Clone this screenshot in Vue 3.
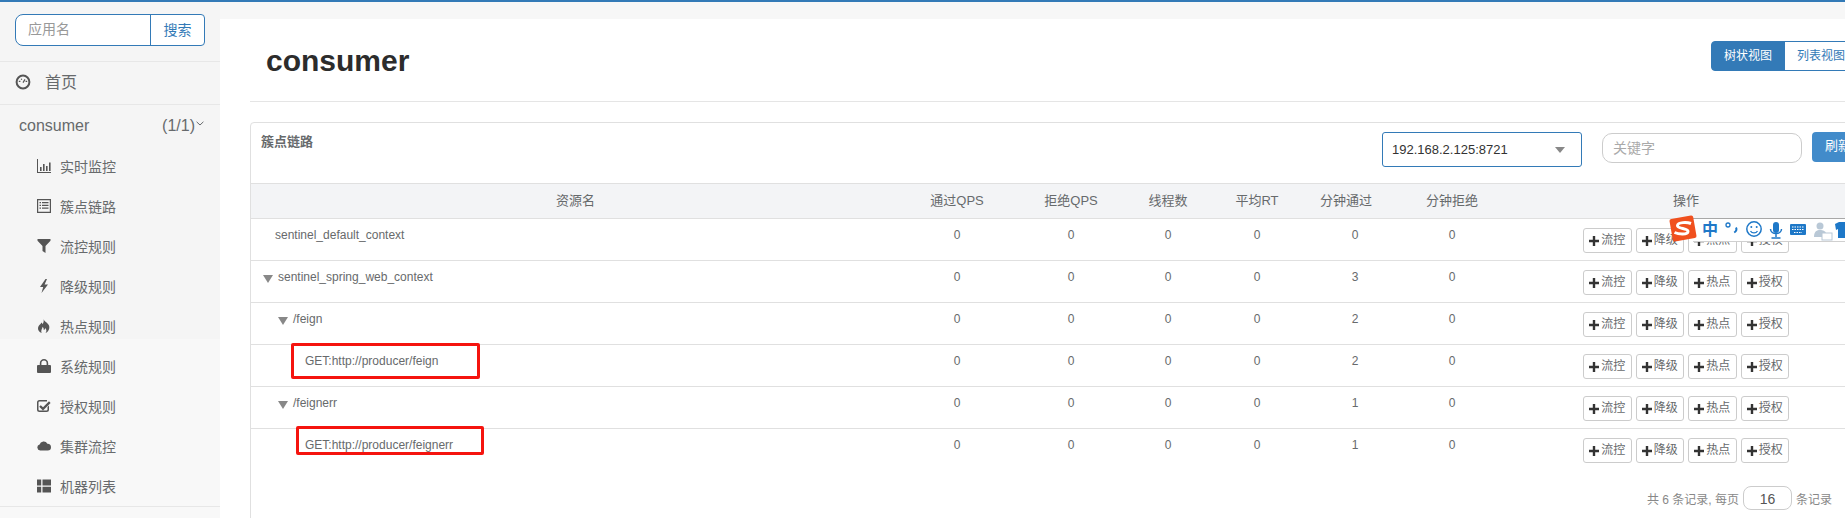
<script setup>
const menu = [
  { label: '实时监控', icon: 'chart' },
  { label: '簇点链路', icon: 'list' },
  { label: '流控规则', icon: 'filter' },
  { label: '降级规则', icon: 'bolt' },
  { label: '热点规则', icon: 'fire' },
  { label: '系统规则', icon: 'lock' },
  { label: '授权规则', icon: 'check' },
  { label: '集群流控', icon: 'cloud' },
  { label: '机器列表', icon: 'grid' }
]
const heads = ['资源名', '通过QPS', '拒绝QPS', '线程数', '平均RT', '分钟通过', '分钟拒绝', '操作']
const rows = [
  { name: 'sentinel_default_context', level: 'l0', arrow: false, nums: [0, 0, 0, 0, 0, 0] },
  { name: 'sentinel_spring_web_context', level: 'l0', arrow: true, nums: [0, 0, 0, 0, 3, 0] },
  { name: '/feign', level: 'l1', arrow: true, nums: [0, 0, 0, 0, 2, 0] },
  { name: 'GET:http://producer/feign', level: 'l2', arrow: false, nums: [0, 0, 0, 0, 2, 0] },
  { name: '/feignerr', level: 'l1', arrow: true, nums: [0, 0, 0, 0, 1, 0] },
  { name: 'GET:http://producer/feignerr', level: 'l2', arrow: false, nums: [0, 0, 0, 0, 1, 0] }
]
const actions = ['流控', '降级', '热点', '授权']
</script>

<template>
  <div class="page">
    <aside class="sidebar">
      <div class="search">
        <div class="search-group">
          <span class="search-input">应用名</span>
          <span class="search-btn">搜索</span>
        </div>
      </div>
      <div class="home">
        <svg class="home-icon" viewBox="0 0 16 16">
          <circle cx="8" cy="8" r="6.4" fill="none" stroke="#555" stroke-width="2" />
          <path d="M3.8 7.4h1.6M10.6 7.4h1.6M6.2 4.8l.6 1M8 8.6l2-3.2" stroke="#555" stroke-width="1.2" fill="none" />
        </svg>
        <span>首页</span>
      </div>
      <div class="app-row">
        <span>consumer</span>
        <span class="app-count">(1/1)
          <svg class="chevron" viewBox="0 0 8 5"><path d="M.6.8 4 4 7.4.8" fill="none" stroke="#676a6c" stroke-width="1" /></svg>
        </span>
      </div>
      <nav class="menu">
        <div v-for="m in menu" :key="m.label" class="menu-item">
          <svg class="menu-icon" viewBox="0 0 14 14" fill="#555">
            <path v-if="m.icon === 'chart'" d="M0 0h1v13h14v1H0zM3 8h1.6v4H3zM6 5h1.6v7H6zM9 7h1.6v5H9zM12 3.500h1.600V12H12z" />
            <path v-else-if="m.icon === 'list'" fill-rule="evenodd" d="M0 0h14v14H0zM1.200 1.200v11.600h11.600V1.200zM2.500 3h1.500v1.300H2.500zM5 3h6.500v1.300H5zM2.500 5.700h1.500V7H2.500zM5 5.700h6.500V7H5zM2.500 8.400h1.500v1.300H2.500zM5 8.400h6.500v1.300H5z" />
            <path v-else-if="m.icon === 'filter'" d="M.5 0h13v1.800L8.500 7v7L5.500 12V7L.5 1.800z" />
            <path v-else-if="m.icon === 'bolt'" d="M8.500 0 3 8h3.200L4.500 14 11 5.500H7.600L10 0z" />
            <path v-else-if="m.icon === 'fire'" d="M6.500 0c.8 2.600 4.300 3.600 5.500 6.500 1 2.800-.3 6.300-3.500 7.500 1.300-1.700 1.200-3.600-.3-5-.1 1.200-.7 1.800-1.500 2.100.2-1.500-.2-2.600-1.200-3.400.1 2.200-2 3-.8 6.300C1.800 13 .4 10.500 1.300 7.800 2 5.700 4 5.300 4.200 3.500c.8.400 1.300 1 1.400 1.800C6.600 3.800 7 2 6.500 0z" />
            <path v-else-if="m.icon === 'lock'" d="M1 6h1.800V4.200a4.200 4.200 0 0 1 8.400 0V6H13a1 1 0 0 1 1 1v6a1 1 0 0 1-1 1H1a1 1 0 0 1-1-1V7a1 1 0 0 1 1-1zm3.400 0h5.200V4.200a2.600 2.600 0 0 0-5.200 0z" />
            <path v-else-if="m.icon === 'check'" d="M2.500 1H10v1.500H2.500a1 1 0 0 0-1 1v7a1 1 0 0 0 1 1h7a1 1 0 0 0 1-1V8L12 6.500v4a2.500 2.500 0 0 1-2.500 2.500h-7A2.500 2.500 0 0 1 0 10.500v-7A2.500 2.500 0 0 1 2.500 1zM3.800 6.200 6 8.300l6-6 1.600 1.600L6 11.500 2.200 7.800z" />
            <path v-else-if="m.icon === 'cloud'" d="M3.200 11.500A3 3 0 0 1 2.600 5.600 4.200 4.200 0 0 1 10.400 4.700 3.500 3.500 0 0 1 14 8.200a3.300 3.300 0 0 1-3.300 3.300z" />
            <path v-else d="M0 .5h4.200v6H0zM5.500.5H14v6H5.500zM0 7.800h4.200v5.700H0zM5.500 7.800H14v5.700H5.500z" />
          </svg>
          <span>{{ m.label }}</span>
        </div>
      </nav>
    </aside>

    <main class="main">
      <div class="content">
        <header class="title-row">
          <h1>consumer</h1>
          <div class="toggle">
            <span class="toggle-on">树状视图</span>
            <span class="toggle-off">列表视图</span>
          </div>
        </header>

        <section class="box">
          <div class="box-head">
            <h5>簇点链路</h5>
            <div class="select">
              <span>192.168.2.125:8721</span>
              <i class="select-caret"></i>
            </div>
            <span class="keyword">关键字</span>
            <span class="refresh">刷新</span>
          </div>

          <div class="grid grid-head">
            <div v-for="h in heads" :key="h" class="head-cell" :class="{ nudge: h === '分钟通过' }">{{ h }}</div>
          </div>
          <div v-for="(r, idx) in rows" :key="r.name" class="grid grid-row" :class="{ last: idx === rows.length - 1 }">
            <div class="name-cell" :class="r.level">
              <i v-if="r.arrow" class="tree-arrow"></i>
              <span>{{ r.name }}</span>
            </div>
            <div v-for="(n, i) in r.nums" :key="i" class="num-cell">{{ n }}</div>
            <div class="ops">
              <span v-for="a in actions" :key="a" class="op">
                <svg class="plus" viewBox="0 0 10 10"><path d="M3.800 0h2.400v3.800H10v2.400H6.200V10H3.800V6.200H0V3.800h3.800z" fill="#333" /></svg>{{ a }}
              </span>
            </div>
          </div>

          <div class="pager">
            <span>共 6 条记录, 每页</span>
            <span class="page-size">16</span>
            <span>条记录</span>
          </div>
        </section>
      </div>
    </main>

    <div class="mark mark-a"></div>
    <div class="mark mark-b"></div>

    <div class="ime">
      <svg width="176" height="28" viewBox="0 0 176 28">
        <rect x="24" y="3" width="152" height="23" fill="#fff" />
        <path d="M24 3.500h152" stroke="#a8a8a8" />
        <path d="M24 26.500h152" stroke="#d0d0d0" />
        <rect x="2" y="2" width="24" height="23" rx="2" fill="#f0501e" transform="rotate(-10 14 13.500)" />
        <path d="M22 8.500c-4-1.500-13-1.500-13.500 2s11 2.500 10.500 6-9 3-13.500 1" fill="none" stroke="#fff" stroke-width="3" />
        <text x="33" y="20" font-size="16" font-weight="700" fill="#1e78c8" font-family="Noto Sans CJK SC">中</text>
        <circle cx="59" cy="10" r="2" fill="none" stroke="#1e78c8" stroke-width="1.300" />
        <path d="M67 12.500c1 2-.2 4-1.800 5" fill="none" stroke="#1e78c8" stroke-width="2" />
        <circle cx="85" cy="14" r="7.200" fill="none" stroke="#1e78c8" stroke-width="1.500" />
        <circle cx="82.300" cy="12" r="1" fill="#1e78c8" /><circle cx="87.700" cy="12" r="1" fill="#1e78c8" />
        <path d="M81.500 16c1.500 2.500 5.500 2.500 7 0" fill="none" stroke="#1e78c8" stroke-width="1.300" />
        <rect x="104" y="7" width="6" height="11" rx="3" fill="#1e78c8" />
        <path d="M101.500 14c0 6 11 6 11 0M107 19v3M102.500 23h9" fill="none" stroke="#1e78c8" stroke-width="1.500" />
        <rect x="121" y="9" width="16" height="11" rx="1" fill="#1e78c8" />
        <path d="M123 12h12M123 14.500h12M125 17.500h8" stroke="#fff" stroke-width="1.200" stroke-dasharray="1.500 1" />
        <circle cx="151" cy="11" r="3.500" fill="#b9c8d6" />
        <path d="M145 22c0-6 3-7 6-7s6 1 6 4v3z" fill="#b9c8d6" />
        <rect x="153" y="18" width="10" height="7" fill="#fff" stroke="#b9c8d6" />
        <path d="M166 9l4-2h6v16h-7v-9l-2 1z" fill="#1e78c8" />
      </svg>
    </div>
  </div>
</template>

<style>
html, body { margin: 0; overflow: hidden; background: #fff; }
</style>

<style scoped>
.page {
  position: relative;
  display: flex;
  width: 1845px;
  height: 518px;
  overflow: hidden;
  box-sizing: border-box;
  border-top: 2px solid #337ab7;
  background: #f7f7f7;
  color: #676a6c;
  font-family: "Liberation Sans", "Noto Sans CJK SC", sans-serif;
}
.sidebar {
  flex: 0 0 220px;
  background: linear-gradient(#f5f5f5 337px, #f8f8f8 337px);
}
.search {
  height: 60px;
  box-sizing: border-box;
  padding: 12px 15px 0;
  border-bottom: 1px solid #e7e7e7;
}
.search-group {
  display: flex;
  height: 32px;
  box-sizing: border-box;
  border: 1px solid #337ab7;
  border-radius: 8px 4px 4px 8px;
  background: #fff;
  font-size: 14px;
  line-height: 28px;
}
.search-input { flex: 1; padding-left: 12px; color: #999; }
.search-btn { width: 53px; text-align: center; border-left: 1px solid #337ab7; color: #337ab7; line-height: 30px; }
.home {
  display: flex;
  align-items: center;
  height: 42px;
  box-sizing: content-box;
  padding: 0 15px;
  border-bottom: 1px solid #e7e7e7;
  font-size: 16px;
}
.home span { margin: 0 0 5px 14px; }
.home-icon { width: 16px; height: 16px; margin-bottom: 2px; }
.app-row {
  display: flex;
  justify-content: space-between;
  align-items: center;
  height: 41px;
  padding: 0 16px 0 19px;
  box-sizing: border-box;
  font-size: 16px;
}
.app-count { display: flex; align-items: center; }
.chevron { width: 8px; height: 5px; margin: 0 0 4px 1px; }
.menu { border-bottom: 1px solid #e7e7e7; }
.menu-item {
  display: flex;
  align-items: center;
  height: 40px;
  padding-left: 37px;
  font-size: 14px;
}
.menu-item span { margin-left: 9px; }
.menu-icon { width: 14px; height: 14px; }
.main {
  flex: 1;
  min-width: 0;
  margin-top: 17px;
  background: #fff;
  overflow: hidden;
}
.content { width: 1622px; margin-left: 30px; }
.title-row {
  display: flex;
  justify-content: space-between;
  align-items: flex-start;
  height: 82px;
  border-bottom: 1px solid #e5e5e5;
}
h1 {
  margin: 24px 0 0 16px;
  color: #2c2c2c;
  font-size: 30px;
  line-height: 36px;
  font-weight: 700;
}
.toggle {
  display: flex;
  margin: 22px 14px 0 0;
  height: 30px;
  box-sizing: border-box;
  font-size: 12px;
  line-height: 28px;
}
.toggle span { width: 74px; box-sizing: border-box; text-align: center; border: 1px solid #337ab7; }
.toggle-on { background: #337ab7; color: #fff; border-radius: 4px 0 0 4px; }
.toggle-off { color: #337ab7; margin-left: -1px; }
.box {
  margin-top: 20px;
  min-height: 400px;
  border: 1px solid #e0e0e0;
  border-radius: 4px 4px 0 0;
}
.box-head {
  display: flex;
  align-items: flex-start;
  height: 60px;
  box-sizing: border-box;
  padding-top: 9px;
}
h5 {
  flex: none;
  margin: 1px 0 0 10px;
  width: 1121px;
  font-size: 13px;
  line-height: 18px;
  font-weight: 700;
}
.select {
  flex: none;
  display: flex;
  justify-content: space-between;
  align-items: center;
  width: 200px;
  height: 35px;
  box-sizing: border-box;
  padding: 0 16px 0 9px;
  border: 1px solid #337ab7;
  border-radius: 3px;
  color: #333;
  font-size: 13px;
}
.select-caret {
  width: 0;
  height: 0;
  border-left: 5px solid transparent;
  border-right: 5px solid transparent;
  border-top: 6px solid #888;
}
.keyword {
  flex: none;
  width: 200px;
  height: 30px;
  box-sizing: border-box;
  margin: 1px 0 0 20px;
  padding-left: 10px;
  border: 1px solid #ccc;
  border-radius: 10px;
  color: #aaa;
  font-size: 14px;
  line-height: 28px;
}
.refresh {
  flex: none;
  margin-left: 10px;
  width: 59px;
  height: 30px;
  box-sizing: border-box;
  padding-left: 13px;
  background: #428bca;
  border-radius: 4px;
  color: #fff;
  font-size: 13px;
  line-height: 28px;
}
.grid {
  display: grid;
  grid-template-columns: 649px 114px 114px 80px 98px 98px 96px 372px;
}
.grid-head {
  height: 34px;
  background: #f3f4f6;
  border-top: 1px solid #e0e0e0;
  border-bottom: 1px solid #e0e0e0;
}
.head-cell {
  text-align: center;
  font-size: 13px;
  line-height: 34px;
}
.nudge { padding-right: 18px; }
.grid-row {
  height: 41px;
  border-bottom: 1px solid #e0e0e0;
  font-size: 12px;
  line-height: 17px;
}
.grid-row.last { border-bottom: none; }
.name-cell { display: flex; align-items: flex-start; padding-top: 8px; }
.l0 { padding-left: 12px; }
.l1 { padding-left: 27px; }
.l2 { padding-left: 54px; }
.name-cell:not(:has(.tree-arrow)).l0 { padding-left: 24px; }
.tree-arrow {
  width: 0;
  height: 0;
  margin: 6px 5px 0 0;
  border-left: 5px solid transparent;
  border-right: 5px solid transparent;
  border-top: 8px solid #888;
}
.num-cell { padding-top: 8px; text-align: center; }
.ops {
  display: flex;
  justify-content: center;
  gap: 4px;
  padding-top: 9px;
}
.op {
  display: flex;
  align-items: center;
  justify-content: center;
  gap: 2px;
  width: 48.500px;
  height: 25px;
  box-sizing: border-box;
  border: 1px solid #ccc;
  border-radius: 3px;
  white-space: nowrap;
}
.plus { width: 10px; height: 10px; flex: none; }
.pager {
  display: flex;
  justify-content: flex-end;
  align-items: center;
  gap: 4px;
  padding: 16px 39px 0 0;
  color: #888;
  font-size: 12px;
}
.page-size {
  width: 49px;
  height: 24px;
  box-sizing: border-box;
  border: 1px solid #ccc;
  border-radius: 8px;
  color: #555;
  font-size: 14px;
  line-height: 24px;
  text-align: center;
}
.mark {
  position: absolute;
  box-sizing: border-box;
  border: 3px solid #f5140f;
  border-radius: 2px;
}
.mark-a { left: 291px; top: 341px; width: 189px; height: 36px; }
.mark-b { left: 296px; top: 424px; width: 188px; height: 29px; }
.ime { position: absolute; left: 1669px; top: 213px; line-height: 0; }
</style>
